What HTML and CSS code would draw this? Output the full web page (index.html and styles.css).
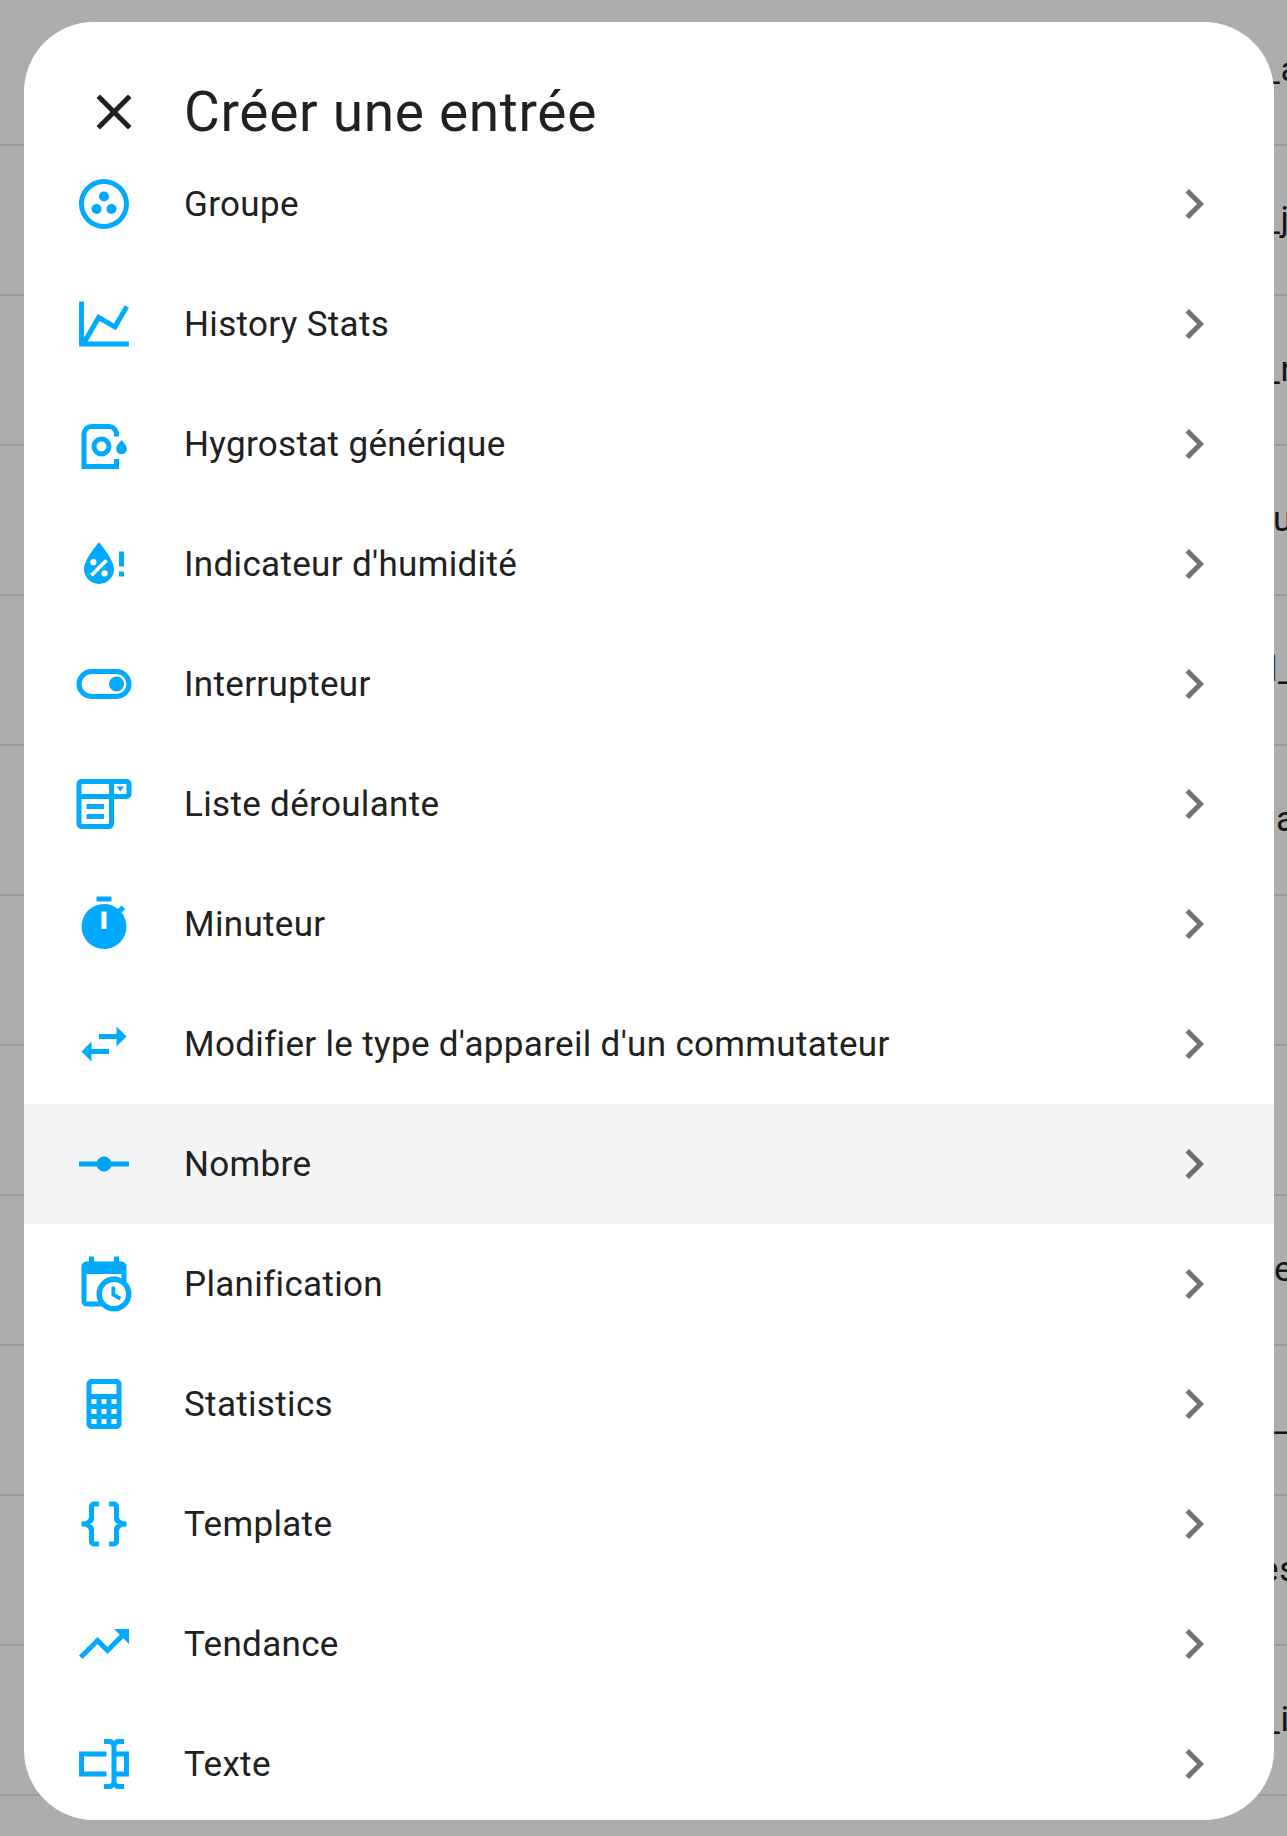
FILE: index.html
```html
<!DOCTYPE html>
<html lang="fr">
<head>
<meta charset="utf-8">
<title>Créer une entrée</title>
<link rel="stylesheet" href="styles.css">
</head>
<body>
<div class="table">
  <div class="table-row"><span style="margin-left:1264px">_a</span></div>
  <div class="table-row"><span style="margin-left:1264px">_j</span></div>
  <div class="table-row"><span style="margin-left:1264px">_r</span></div>
  <div class="table-row"><span style="margin-left:1273px">u</span></div>
  <div class="table-row"><span style="margin-left:1269px">l_</span></div>
  <div class="table-row"><span style="margin-left:1276px">a</span></div>
  <div class="table-row"></div>
  <div class="table-row"></div>
  <div class="table-row"><span style="margin-left:1274px">e</span></div>
  <div class="table-row"><span style="margin-left:1274px">__</span></div>
  <div class="table-row"><span style="margin-left:1260px">es</span></div>
  <div class="table-row"><span style="margin-left:1264px">_i</span></div>
  <div class="table-row"></div>
</div>
<svg class="defs" aria-hidden="true"><symbol id="chevron" viewBox="0 0 24 24"><path d="M8.59,16.58L13.17,12L8.59,7.41L10,6L16,12L10,18L8.59,16.58Z"/></symbol></svg>
<div class="dialog" role="dialog">
  <header class="header">
    <svg class="icon close" viewBox="0 0 24 24"><path d="M19,6.41L17.59,5L12,10.59L6.41,5L5,6.41L10.59,12L5,17.59L6.41,19L12,13.41L17.59,19L19,17.59L13.41,12L19,6.41Z"/></svg>
    <h1 class="title">Créer une entrée</h1>
  </header>
  <ul class="list">
    <li class="item"><svg class="icon" viewBox="0 0 24 24"><path d="M15,12C13.89,12 13,12.89 13,14A2,2 0 0,0 15,16A2,2 0 0,0 17,14C17,12.89 16.1,12 15,12M12,20A8,8 0 0,1 4,12C4,7.58 7.58,4 12,4C16.42,4 20,7.58 20,12C20,16.42 16.42,20 12,20M12,2C6.47,2 2,6.5 2,12A10,10 0 0,0 12,22A10,10 0 0,0 22,12A10,10 0 0,0 12,2M14,9C14,7.89 13.1,7 12,7C10.89,7 10,7.89 10,9A2,2 0 0,0 12,11A2,2 0 0,0 14,9M9,12A2,2 0 0,0 7,14A2,2 0 0,0 9,16C10.11,16 11,15.1 11,14C11,12.89 10.11,12 9,12Z"/></svg><span class="label">Groupe</span><svg class="icon next"><use href="#chevron"/></svg></li>
    <li class="item"><svg class="icon" viewBox="0 0 24 24"><path d="M16,11.78L20.24,4.45L21.97,5.45L16.74,14.5L10.23,10.75L5.46,19H22V21H2V3H4V17.54L9.5,8L16,11.78Z"/></svg><span class="label">History Stats</span><svg class="icon next"><use href="#chevron"/></svg></li>
    <li class="item"><svg class="icon" viewBox="0 0 24 24"><path fill-rule="evenodd" d="M3,22V8A4,4 0 0,1 7,4H14A4,4 0 0,1 18,8V9H16V8A2,2 0 0,0 14,6H7A2,2 0 0,0 5,8V20H16V18H18V22ZM11,9A4,4 0 0,1 11,17A4,4 0 0,1 11,9ZM11,11A2,2 0 0,0 11,15A2,2 0 0,0 11,11ZM19,10.4C19,10.4 21.15,12.6 21.15,14A2.15,2.15 0 0,1 16.85,14C16.85,12.6 19,10.4 19,10.4Z"/></svg><span class="label">Hygrostat générique</span><svg class="icon next"><use href="#chevron"/></svg></li>
    <li class="item"><svg class="icon" viewBox="0 0 24 24"><path fill-rule="evenodd" d="M18,7H20V13H18ZM18,15H20V17H18ZM10,3.25C10,3.25 4,10 4,14A6,6 0 0,0 16,14C16,10 10,3.25 10,3.25ZM12.47,9.97L13.53,11.03L7.53,17.03L6.47,15.97ZM7.75,10A1.25,1.25 0 0,1 7.75,12.5A1.25,1.25 0 0,1 7.75,10ZM12.25,14.5A1.25,1.25 0 0,1 12.25,17A1.25,1.25 0 0,1 12.25,14.5Z"/></svg><span class="label">Indicateur d'humidité</span><svg class="icon next"><use href="#chevron"/></svg></li>
    <li class="item"><svg class="icon" viewBox="0 0 24 24"><path fill-rule="evenodd" d="M7,6H17A6,6 0 0,1 17,18H7A6,6 0 0,1 7,6ZM7,8A4,4 0 0,0 7,16H17A4,4 0 0,0 17,8ZM17,9A3,3 0 0,1 17,15A3,3 0 0,1 17,9Z"/></svg><span class="label">Interrupteur</span><svg class="icon next"><use href="#chevron"/></svg></li>
    <li class="item"><svg class="icon" viewBox="0 0 24 24"><path fill-rule="evenodd" d="M3,2H21A2,2 0 0,1 23,4V8A2,2 0 0,1 21,10H16V20A2,2 0 0,1 14,22H3A2,2 0 0,1 1,20V4A2,2 0 0,1 3,2ZM3,4V8H14V4ZM16,4V8H21V4ZM3,10V20H14V10ZM5,12H12V14H5ZM5,16H12V18H5ZM17,5H20L18.5,7Z"/></svg><span class="label">Liste déroulante</span><svg class="icon next"><use href="#chevron"/></svg></li>
    <li class="item"><svg class="icon" viewBox="0 0 24 24"><path d="M19.03,7.39L20.45,5.97C20,5.46 19.55,5 19.04,4.56L17.62,6C16.07,4.74 14.12,4 12,4A9,9 0 0,0 3,13A9,9 0 0,0 12,22C17,22 21,17.97 21,13C21,10.88 20.26,8.93 19.03,7.39M13,14H11V7H13M15,1H9V3H15V1Z"/></svg><span class="label">Minuteur</span><svg class="icon next"><use href="#chevron"/></svg></li>
    <li class="item"><svg class="icon" viewBox="0 0 24 24"><path d="M21,9L17,5V8H10V10H17V13M7,11L3,15L7,19V16H14V14H7V11Z"/></svg><span class="label">Modifier le type d'appareil d'un commutateur</span><svg class="icon next"><use href="#chevron"/></svg></li>
    <li class="item hovered"><svg class="icon" viewBox="0 0 24 24"><path d="M2,11H9.17C9.58,9.83 10.69,9 12,9C13.31,9 14.42,9.83 14.83,11H22V13H14.83C14.42,14.17 13.31,15 12,15C10.69,15 9.58,14.17 9.17,13H2V11Z"/></svg><span class="label">Nombre</span><svg class="icon next"><use href="#chevron"/></svg></li>
    <li class="item"><svg class="icon" viewBox="0 0 24 24"><path d="M15,13H16.5V15.82L18.94,17.23L18.19,18.53L15,16.69V13M19,8H5V19H9.67C9.24,18.09 9,17.07 9,16A7,7 0 0,1 16,9C17.07,9 18.09,9.24 19,9.67V8M5,21C3.89,21 3,20.1 3,19V5C3,3.89 3.89,3 5,3H6V1H8V3H16V1H18V3H19A2,2 0 0,1 21,5V11.1C22.24,12.36 23,14.09 23,16A7,7 0 0,1 16,23C14.09,23 12.36,22.24 11.1,21H5M16,11.15A4.85,4.85 0 0,0 11.15,16C11.15,18.68 13.32,20.85 16,20.85A4.85,4.85 0 0,0 20.85,16C20.85,13.32 18.68,11.15 16,11.15Z"/></svg><span class="label">Planification</span><svg class="icon next"><use href="#chevron"/></svg></li>
    <li class="item"><svg class="icon" viewBox="0 0 24 24"><path fill-rule="evenodd" d="M7,2H17A2,2 0 0,1 19,4V20A2,2 0 0,1 17,22H7A2,2 0 0,1 5,20V4A2,2 0 0,1 7,2ZM7,4V8H17V4ZM7,10V12H9V10ZM11,10V12H13V10ZM15,10V12H17V10ZM7,14V16H9V14ZM11,14V16H13V14ZM15,14V16H17V14ZM7,18V20H9V18ZM11,18V20H13V18ZM15,18V20H17V18Z"/></svg><span class="label">Statistics</span><svg class="icon next"><use href="#chevron"/></svg></li>
    <li class="item"><svg class="icon" viewBox="0 0 24 24"><path d="M8,3A2,2 0 0,0 6,5V9A2,2 0 0,1 4,11H3V13H4A2,2 0 0,1 6,15V19A2,2 0 0,0 8,21H10V19H8V14A2,2 0 0,0 6,12A2,2 0 0,0 8,10V5H10V3M16,3A2,2 0 0,1 18,5V9A2,2 0 0,0 20,11H21V13H20A2,2 0 0,0 18,15V19A2,2 0 0,1 16,21H14V19H16V14A2,2 0 0,1 18,12A2,2 0 0,1 16,10V5H14V3H16Z"/></svg><span class="label">Template</span><svg class="icon next"><use href="#chevron"/></svg></li>
    <li class="item"><svg class="icon" viewBox="0 0 24 24"><path d="M16,6L18.29,8.29L13.41,13.17L9.41,9.17L2,16.59L3.41,18L9.41,12L13.41,16L19.71,9.71L22,12V6H16Z"/></svg><span class="label">Tendance</span><svg class="icon next"><use href="#chevron"/></svg></li>
    <li class="item"><svg class="icon" viewBox="0 0 24 24"><path d="M17,7H22V17H17V19A1,1 0 0,0 18,20H20V22H17.5C16.95,22 16,21.55 16,21C16,21.55 15.05,22 14.5,22H12V20H14A1,1 0 0,0 15,19V5A1,1 0 0,0 14,4H12V2H14.5C15.05,2 16,2.45 16,3C16,2.45 16.95,2 17.5,2H20V4H18A1,1 0 0,0 17,5V7M2,7H13V9H4V15H13V17H2V7M20,15V9H17V15H20Z"/></svg><span class="label">Texte</span><svg class="icon next"><use href="#chevron"/></svg></li>
  </ul>
</div>
</body>
</html>
```
FILE: styles.css
```css
* { box-sizing: border-box; }
body {
  margin: 0;
  height: 1836px;
  overflow: hidden;
  position: relative;
  background: #adadad;
  font-family: Roboto, "Liberation Sans", sans-serif;
  color: #212121;
}
.defs { display: none; }
.table {
  height: 1836px;
  margin-top: -4px;
  overflow: hidden;
}
.table-row {
  height: 150px;
  display: flex;
  align-items: center;
  border-bottom: 2px solid #999;
  overflow: hidden;
  white-space: nowrap;
  font-size: 35px;
  line-height: 50px;
  letter-spacing: 0.6px;
  color: #161616;
}
.table-row:last-child { border-bottom: 0; }
.dialog {
  position: absolute;
  top: 22px;
  left: 24px;
  width: 1250px;
  height: 1798px;
  border-radius: 70px;
  background: #fff;
  overflow: hidden;
}
.header {
  height: 122px;
  padding: 60px 60px 2px;
  display: flex;
  align-items: center;
  gap: 40px;
}
.title {
  margin: 0;
  font-size: 55px;
  font-weight: 400;
  line-height: 60px;
  letter-spacing: 0.0125em;
}
.list {
  margin: 0;
  padding: 0;
  list-style: none;
}
.item {
  height: 120px;
  padding: 0 50px;
  display: flex;
  align-items: center;
  gap: 50px;
}
.hovered { background: #f4f4f4; }
.icon {
  flex: none;
  width: 60px;
  height: 60px;
  fill: #00abff;
}
.hovered .icon { fill: #00a4f4; }
.close { fill: #212121; }
.icon.next { fill: #727272; }
.hovered .icon.next { fill: #6d6d6d; }
.label {
  flex: 1;
  padding-top: 2px;
  font-size: 35px;
  line-height: 50px;
  letter-spacing: 0.009375em;
}
```
